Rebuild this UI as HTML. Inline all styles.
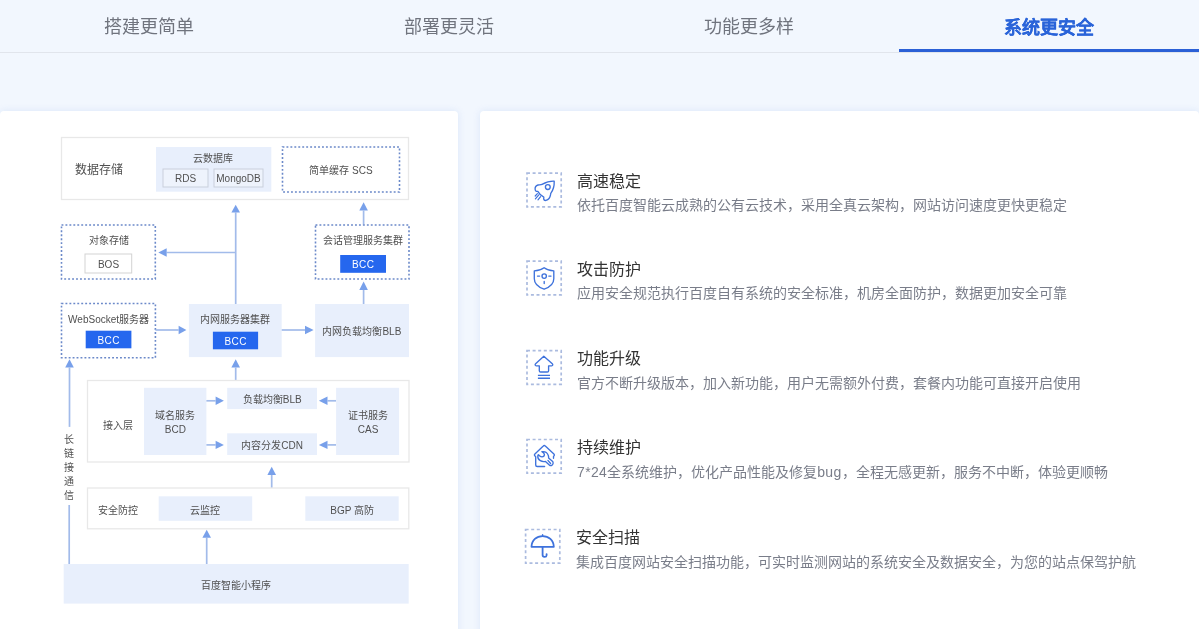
<!DOCTYPE html>
<html lang="zh-CN"><head><meta charset="utf-8"><style>
*{margin:0;padding:0;box-sizing:border-box}
html,body{width:1199px;height:629px;overflow:hidden;background:#f2f7fe;font-family:"Liberation Sans",sans-serif}
.tabs{position:absolute;left:0;top:0;width:1199px;height:53px;border-bottom:1px solid #e1e5ec}
.tab{position:absolute;top:0.75px;will-change:transform;width:299.75px;height:52px;text-align:center;font-size:18px;line-height:52px;color:#70747e;margin-left:-0.75px}
.tab.on{color:#2a64d9;font-weight:700;-webkit-text-stroke:0.15px #2a64d9;top:1.5px}
.bar{position:absolute;left:899px;top:49px;width:300px;height:3px;background:#2b60d6}
.card{position:absolute;top:111px;height:560px;background:#fff;border-radius:4px;box-shadow:0 0 7px rgba(190,210,245,.45)}
svg text{font-family:"Liberation Sans",sans-serif}
.tt{position:absolute;font-size:16px;line-height:22px;color:#333;will-change:transform;white-space:nowrap}
.dd{position:absolute;font-size:14px;line-height:20px;color:#797d89;will-change:transform;white-space:nowrap}
</style></head><body>
<div class="tabs">
<div class="tab" style="left:0">搭建更简单</div>
<div class="tab" style="left:299.75px">部署更灵活</div>
<div class="tab" style="left:599.5px">功能更多样</div>
<div class="tab on" style="left:899.25px">系统更安全</div>
</div>
<div class="bar"></div>
<div class="card" style="left:0;width:458px"></div>
<div class="card" style="left:480px;width:719px"></div>
<svg style="position:absolute;left:0;top:0;filter:blur(0.3px)" width="460" height="629" viewBox="0 0 460 629">
<rect x="61.5" y="137.5" width="347.0" height="62.0" fill="#fff" stroke="#e8e8e8" stroke-width="1.3" />
<text x="98.5" y="170.10" font-size="12" fill="#505050" text-anchor="middle" dominant-baseline="central" font-weight="normal">数据存储</text>
<rect x="156" y="147" width="115.30000000000001" height="44.69999999999999" fill="#e8effc" stroke="none" stroke-width="1" />
<text x="212.7" y="158.90" font-size="10" fill="#505050" text-anchor="middle" dominant-baseline="central" font-weight="normal">云数据库</text>
<rect x="163" y="169" width="45" height="18" fill="#eef3fc" stroke="#c9d0dc" stroke-width="1" />
<text x="185.5" y="178.90" font-size="10" fill="#505050" text-anchor="middle" dominant-baseline="central" font-weight="normal">RDS</text>
<rect x="214" y="169" width="49" height="18" fill="#eef3fc" stroke="#c9d0dc" stroke-width="1" />
<text x="238.5" y="178.90" font-size="10" fill="#505050" text-anchor="middle" dominant-baseline="central" font-weight="normal">MongoDB</text>
<rect x="282.5" y="147" width="117.0" height="45" fill="#fff" stroke="#6b89c9" stroke-width="1.6" stroke-dasharray="1.9 2.05"/>
<text x="341.0" y="170.90" font-size="10" fill="#505050" text-anchor="middle" dominant-baseline="central" font-weight="normal">简单缓存 SCS</text>
<line x1="235.7" y1="212.5" x2="235.7" y2="304" stroke="#a2bbea" stroke-width="1.7"/><polygon points="235.7,204.7 231.39999999999998,212.5 240.0,212.5" fill="#78a0ea"/>
<line x1="236" y1="252.5" x2="166.7" y2="252.5" stroke="#a2bbea" stroke-width="1.7"/><polygon points="158.3,252.5 166.7,248.3 166.7,256.7" fill="#78a0ea"/>
<line x1="363.6" y1="210.6" x2="363.6" y2="224.5" stroke="#a2bbea" stroke-width="1.7"/><polygon points="363.6,202.3 359.3,210.6 367.90000000000003,210.6" fill="#78a0ea"/>
<rect x="61.5" y="225" width="93.80000000000001" height="54" fill="#fff" stroke="#6b89c9" stroke-width="1.6" stroke-dasharray="1.9 2.05"/>
<text x="108.5" y="240.80" font-size="10" fill="#505050" text-anchor="middle" dominant-baseline="central" font-weight="normal">对象存储</text>
<rect x="85" y="254" width="46.69999999999999" height="19" fill="#fff" stroke="#d3d3d3" stroke-width="1" />
<text x="108.5" y="264.60" font-size="10" fill="#505050" text-anchor="middle" dominant-baseline="central" font-weight="normal">BOS</text>
<rect x="315.5" y="225" width="93.5" height="54" fill="#fff" stroke="#6b89c9" stroke-width="1.6" stroke-dasharray="1.9 2.05"/>
<text x="363.2" y="240.70" font-size="10" fill="#505050" text-anchor="middle" dominant-baseline="central" font-weight="normal">会话管理服务集群</text>
<rect x="340.2" y="255" width="45.80000000000001" height="17.80000000000001" fill="#2567ee" stroke="none" stroke-width="1" />
<text x="363.2" y="264.60" font-size="10" fill="#fff" text-anchor="middle" dominant-baseline="central" font-weight="normal" letter-spacing="0.4">BCC</text>
<line x1="363.6" y1="289.9" x2="363.6" y2="304" stroke="#a2bbea" stroke-width="1.7"/><polygon points="363.6,281.4 359.3,289.9 367.90000000000003,289.9" fill="#78a0ea"/>
<rect x="61.5" y="303.5" width="93.9" height="54.30000000000001" fill="#fff" stroke="#6b89c9" stroke-width="1.6" stroke-dasharray="1.9 2.05"/>
<text x="108.6" y="319.20" font-size="10" fill="#505050" text-anchor="middle" dominant-baseline="central" font-weight="normal">WebSocket服务器</text>
<rect x="85.7" y="330.7" width="45.7" height="17.600000000000023" fill="#2567ee" stroke="none" stroke-width="1" />
<text x="108.7" y="340.10" font-size="10" fill="#fff" text-anchor="middle" dominant-baseline="central" font-weight="normal" letter-spacing="0.4">BCC</text>
<line x1="155.4" y1="330" x2="178.6" y2="330" stroke="#a2bbea" stroke-width="1.7"/><polygon points="186.4,330 178.6,325.8 178.6,334.2" fill="#78a0ea"/>
<rect x="188.9" y="304" width="92.79999999999998" height="53.10000000000002" fill="#e8effc" stroke="none" stroke-width="1" />
<text x="235.4" y="319.90" font-size="10" fill="#505050" text-anchor="middle" dominant-baseline="central" font-weight="normal">内网服务器集群</text>
<rect x="212.9" y="331.7" width="45.20000000000002" height="17.600000000000023" fill="#2567ee" stroke="none" stroke-width="1" />
<text x="235.7" y="341.10" font-size="10" fill="#fff" text-anchor="middle" dominant-baseline="central" font-weight="normal" letter-spacing="0.4">BCC</text>
<line x1="281.7" y1="330" x2="305" y2="330" stroke="#a2bbea" stroke-width="1.7"/><polygon points="313.6,330 305,325.8 305,334.2" fill="#78a0ea"/>
<rect x="315.1" y="304" width="93.89999999999998" height="53.10000000000002" fill="#e8effc" stroke="none" stroke-width="1" />
<text x="361.9" y="331.90" font-size="10" fill="#505050" text-anchor="middle" dominant-baseline="central" font-weight="normal">内网负载均衡BLB</text>
<line x1="69.5" y1="367.6" x2="69.5" y2="426.9" stroke="#a2bbea" stroke-width="1.7"/><polygon points="69.5,359.3 65.2,367.6 73.8,367.6" fill="#78a0ea"/>
<text x="69.4" y="439.60" font-size="10" fill="#505050" text-anchor="middle" dominant-baseline="central" font-weight="normal">长</text>
<text x="69.4" y="453.60" font-size="10" fill="#505050" text-anchor="middle" dominant-baseline="central" font-weight="normal">链</text>
<text x="69.4" y="467.60" font-size="10" fill="#505050" text-anchor="middle" dominant-baseline="central" font-weight="normal">接</text>
<text x="69.4" y="481.60" font-size="10" fill="#505050" text-anchor="middle" dominant-baseline="central" font-weight="normal">通</text>
<text x="69.4" y="495.60" font-size="10" fill="#505050" text-anchor="middle" dominant-baseline="central" font-weight="normal">信</text>
<line x1="69.2" y1="505" x2="69.2" y2="564" stroke="#a2bbea" stroke-width="1.7"/>
<line x1="235.7" y1="367.6" x2="235.7" y2="380.5" stroke="#a2bbea" stroke-width="1.7"/><polygon points="235.7,359.3 231.39999999999998,367.6 240.0,367.6" fill="#78a0ea"/>
<rect x="87.5" y="380.5" width="321.5" height="81.5" fill="#fff" stroke="#e8e8e8" stroke-width="1.3" />
<text x="117.5" y="425.70" font-size="10" fill="#505050" text-anchor="middle" dominant-baseline="central" font-weight="normal">接入层</text>
<rect x="144" y="387.8" width="62.400000000000006" height="67.19999999999999" fill="#e8effc" stroke="none" stroke-width="1" />
<text x="175.2" y="415.60" font-size="10" fill="#505050" text-anchor="middle" dominant-baseline="central" font-weight="normal">域名服务</text>
<text x="175.3" y="429.30" font-size="10" fill="#505050" text-anchor="middle" dominant-baseline="central" font-weight="normal">BCD</text>
<line x1="206.4" y1="400.8" x2="215.6" y2="400.8" stroke="#a2bbea" stroke-width="1.7"/><polygon points="223.9,400.8 215.6,396.6 215.6,405.0" fill="#78a0ea"/>
<line x1="206.4" y1="444.9" x2="215.6" y2="444.9" stroke="#a2bbea" stroke-width="1.7"/><polygon points="223.9,444.9 215.6,440.7 215.6,449.09999999999997" fill="#78a0ea"/>
<rect x="227.2" y="387.8" width="89.80000000000001" height="21.30000000000001" fill="#e8effc" stroke="none" stroke-width="1" />
<text x="272.3" y="399.70" font-size="10" fill="#505050" text-anchor="middle" dominant-baseline="central" font-weight="normal">负载均衡BLB</text>
<rect x="227.2" y="433.3" width="89.80000000000001" height="21.69999999999999" fill="#e8effc" stroke="none" stroke-width="1" />
<text x="272.1" y="445.60" font-size="10" fill="#505050" text-anchor="middle" dominant-baseline="central" font-weight="normal">内容分发CDN</text>
<line x1="336.1" y1="400.8" x2="327.5" y2="400.8" stroke="#a2bbea" stroke-width="1.7"/><polygon points="318.9,400.8 327.5,396.6 327.5,405.0" fill="#78a0ea"/>
<line x1="336.1" y1="444.9" x2="327.5" y2="444.9" stroke="#a2bbea" stroke-width="1.7"/><polygon points="318.9,444.9 327.5,440.7 327.5,449.09999999999997" fill="#78a0ea"/>
<rect x="336.1" y="387.8" width="63.0" height="67.19999999999999" fill="#e8effc" stroke="none" stroke-width="1" />
<text x="368.0" y="415.70" font-size="10" fill="#505050" text-anchor="middle" dominant-baseline="central" font-weight="normal">证书服务</text>
<text x="368.1" y="429.30" font-size="10" fill="#505050" text-anchor="middle" dominant-baseline="central" font-weight="normal">CAS</text>
<line x1="271.7" y1="475" x2="271.7" y2="488" stroke="#a2bbea" stroke-width="1.7"/><polygon points="271.7,466.7 267.4,475 276.0,475" fill="#78a0ea"/>
<rect x="87.5" y="488" width="321.3" height="40.799999999999955" fill="#fff" stroke="#e8e8e8" stroke-width="1.3" />
<text x="118.2" y="510.20" font-size="10" fill="#505050" text-anchor="middle" dominant-baseline="central" font-weight="normal">安全防控</text>
<rect x="158.7" y="496.3" width="93.5" height="24.499999999999943" fill="#e8effc" stroke="none" stroke-width="1" />
<text x="205.0" y="510.20" font-size="10" fill="#505050" text-anchor="middle" dominant-baseline="central" font-weight="normal">云监控</text>
<rect x="305.3" y="496.3" width="93.39999999999998" height="24.499999999999943" fill="#e8effc" stroke="none" stroke-width="1" />
<text x="352.1" y="510.20" font-size="10" fill="#505050" text-anchor="middle" dominant-baseline="central" font-weight="normal">BGP 高防</text>
<line x1="206.7" y1="537.8" x2="206.7" y2="564" stroke="#a2bbea" stroke-width="1.7"/><polygon points="206.7,529.7 202.39999999999998,537.8 211.0,537.8" fill="#78a0ea"/>
<rect x="63.7" y="564" width="345.0" height="39.60000000000002" fill="#e8effc" stroke="none" stroke-width="1" />
<text x="236.2" y="585.10" font-size="10" fill="#505050" text-anchor="middle" dominant-baseline="central" font-weight="normal">百度智能小程序</text>
</svg>
<svg style="position:absolute;left:0;top:0;filter:blur(0.25px)" width="1199" height="629" viewBox="0 0 1199 629"><g transform="translate(526,172.2)"><path d="M1 1 H35.2 V34.7 H1 Z" fill="none" stroke="#abbbdf" stroke-width="1.7" stroke-dasharray="3 2.6"/><path d="M28.2 9 C25 8.8 21.5 9.3 16 12.2 C15 12.7 13.5 12.6 12 12.8 C10 13.3 9 15 9.1 16.9 C9.1 18 9.4 18.8 10.2 19.1 L11.8 19.2 C13 21.4 15 23.6 17.8 24.9 L17.7 26.8 C18 28 19 28.4 20 28.2 C22 27.6 24 26 24.5 22.7 C24.6 21.8 24.7 21.2 24.9 20.9 Q28.5 16 28.2 9 Z" fill="none" stroke="#3e72dc" stroke-width="1.35" stroke-linecap="round" stroke-linejoin="round"/><circle cx="21.8" cy="14.9" r="2.4" fill="none" stroke="#3e72dc" stroke-width="1.35"/><path d="M12.8 22.6 L9.4 26.6 M14.6 24.4 L12 27.6 M11.4 21.4 L9.2 23.8" fill="none" stroke="#3e72dc" stroke-width="1.2" stroke-linecap="round" stroke-linejoin="round"/></g><g transform="translate(526,260.2)"><path d="M1 1 H35.2 V34.7 H1 Z" fill="none" stroke="#abbbdf" stroke-width="1.7" stroke-dasharray="3 2.6"/><path d="M18.1 7.5 Q14.5 10.2 8.3 10.6 L8.3 18.5 C8.3 23 12 26.8 18.1 29 C24.2 26.8 27.8 23 27.8 18.5 L27.8 10.6 Q21.7 10.2 18.1 7.5 Z" fill="none" stroke="#3e72dc" stroke-width="1.35" stroke-linecap="round" stroke-linejoin="round"/><circle cx="18.2" cy="15.9" r="2.2" fill="none" stroke="#3e72dc" stroke-width="1.35"/><path d="M11.5 15.9 L13.6 15.9 M22.8 15.9 L25 15.9 M18.2 21.3 L18.2 23.3" fill="none" stroke="#3e72dc" stroke-width="1.35" stroke-linecap="round" stroke-linejoin="round"/></g><g transform="translate(526,349.6)"><path d="M1 1 H35.2 V34.7 H1 Z" fill="none" stroke="#abbbdf" stroke-width="1.7" stroke-dasharray="3 2.6"/><path d="M17.8 6.7 L9.6 14.2 C8.7 15 9.2 16.2 10.2 16.2 L13.3 16.2 L13.3 21.2 C13.3 22 13.9 22.4 14.6 22.4 L21.3 22.4 C22 22.4 22.6 22 22.6 21.2 L22.6 16.2 L25.7 16.2 C26.7 16.2 27.2 15 26.3 14.2 Z" fill="none" stroke="#3e72dc" stroke-width="1.35" stroke-linecap="round" stroke-linejoin="round"/><path d="M11.9 25.8 L24 25.8 M11.9 28.6 L24 28.6" stroke="#3e72dc" stroke-width="1.35"/></g><g transform="translate(526,438.5)"><path d="M1 1 H35.2 V34.7 H1 Z" fill="none" stroke="#abbbdf" stroke-width="1.7" stroke-dasharray="3 2.6"/><path d="M18.6 28 L11.2 28 C10.2 28 9.7 27.4 9.7 26.5 L9.7 18.2 L8.8 17.3 C8.2 16.7 8.3 16 8.9 15.4 L17.3 7.4 C17.9 6.8 18.7 6.8 19.3 7.4 L27.9 15.6 C28.5 16.2 28.5 17 27.9 17.5 L27.5 17.9 L27.5 19.7" fill="none" stroke="#3e72dc" stroke-width="1.35" stroke-linecap="round" stroke-linejoin="round"/><path d="M15.9 13.2 C18.9 12.8 21.4 14.4 22.3 16.9 C22.7 18 22.7 18.9 22.6 19.4 L26.4 22.8 C27.5 23.8 27.3 25.6 26.1 26.6 C25.2 27.3 24 27.1 23.3 26.4 L19.5 22.9 C18.5 23.1 16 23.2 14.3 22.2 C12.5 21.2 11.6 19.2 11.8 17.3 C11.9 16.6 12.1 16.2 12.4 16.2 C13.3 17.2 14.8 18.3 16 18.3 C17.4 18.3 18.4 17.3 18.4 16 C18.4 15 17.5 14.1 15.9 13.2 Z" fill="none" stroke="#3e72dc" stroke-width="1.35" stroke-linecap="round" stroke-linejoin="round"/><path d="M21.9 21.9 L24.6 25" fill="none" stroke="#3e72dc" stroke-width="1.3" stroke-linecap="round" stroke-linejoin="round"/></g><g transform="translate(524.6,528.5)"><path d="M1 1 H35.2 V34.7 H1 Z" fill="none" stroke="#abbbdf" stroke-width="1.7" stroke-dasharray="3 2.6"/><g transform="translate(0.5,0)"><path d="M6.4 18.3 C6.6 11.5 11.5 7.6 17.5 7.6 C23.5 7.6 28.5 11.5 28.7 18.3 Z" fill="none" stroke="#3e72dc" stroke-width="1.8" stroke-linecap="round" stroke-linejoin="round"/><path d="M17.5 7.6 L17.5 6.2" fill="none" stroke="#3e72dc" stroke-width="1.4" stroke-linecap="round" stroke-linejoin="round"/><path d="M17.5 18.3 L17.5 26.6 C17.5 28.9 21.3 29.2 21.5 26.7 L21.5 25.6" fill="none" stroke="#3e72dc" stroke-width="1.8" stroke-linecap="round" stroke-linejoin="round"/></g></g></svg>
<div class="tt" style="left:577px;top:170.6px">高速稳定</div><div class="dd" style="left:577px;top:195.2px">依托百度智能云成熟的公有云技术，采用全真云架构，网站访问速度更快更稳定</div><div class="tt" style="left:577px;top:258.59999999999997px">攻击防护</div><div class="dd" style="left:577px;top:283.2px">应用安全规范执行百度自有系统的安全标准，机房全面防护，数据更加安全可靠</div><div class="tt" style="left:577px;top:348.0px">功能升级</div><div class="dd" style="left:577px;top:372.6px">官方不断升级版本，加入新功能，用户无需额外付费，套餐内功能可直接开启使用</div><div class="tt" style="left:577px;top:436.9px">持续维护</div><div class="dd" style="left:577px;top:461.5px"><span style="letter-spacing:.35px">7*24</span>全系统维护，优化产品性能及修复<span style="letter-spacing:.35px">bug</span>，全程无感更新，服务不中断，体验更顺畅</div><div class="tt" style="left:575.6px;top:526.9px">安全扫描</div><div class="dd" style="left:575.6px;top:551.5px">集成百度网站安全扫描功能，可实时监测网站的系统安全及数据安全，为您的站点保驾护航</div>
</body></html>
